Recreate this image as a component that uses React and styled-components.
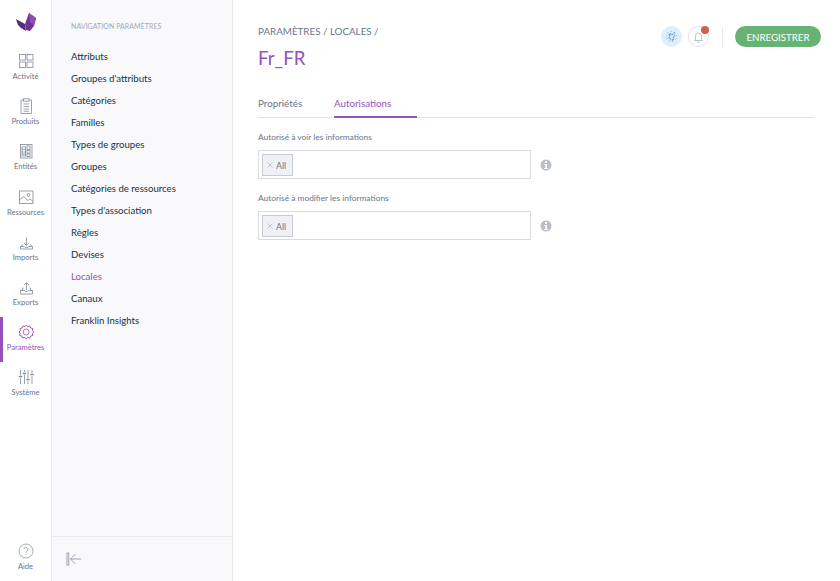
import React from 'react'
import styled, { createGlobalStyle } from 'styled-components'

const Global = createGlobalStyle`
  html, body { margin: 0; padding: 0; height: 100%; background: #fff; }
  body { font-family: Lato, "Open Sans", sans-serif; overflow: hidden; }
  #root { height: 100%; }
`

const purple = '#9452ba'

const Page = styled.div`
  display: flex;
  width: 840px;
  height: 581px;
`

const Menu = styled.nav`
  width: 51px;
  flex: none;
  display: flex;
  flex-direction: column;
  align-items: stretch;
  background: #fff;
  border-right: 1px solid #e8ebee;
`

const LogoBox = styled.div`
  height: 46px;
  display: flex;
  justify-content: center;
  padding-top: 12px;
  box-sizing: border-box;
`

const MenuItem = styled.div`
  height: 45.2px;
  display: flex;
  flex-direction: column;
  align-items: center;
  padding-top: 6px;
  box-sizing: border-box;
  gap: 1px;
  font-size: 7.6px;
  line-height: 11px;
  color: ${(p) => (p.$active ? purple : '#67768a')};
  border-left: 3px solid ${(p) => (p.$active ? purple : 'transparent')};
  padding-right: 3px;
  white-space: nowrap;
  svg { display: block; }
`

const MenuSpacer = styled.div`
  flex: 1;
`

const HelpItem = styled(MenuItem)`
  height: 38px;
  padding-top: 0;
  gap: 2px;
  border-left: 0;
  padding-right: 0;
`

const Sidebar = styled.aside`
  width: 180px;
  flex: none;
  display: flex;
  flex-direction: column;
  background: #f9f9fb;
  border-right: 1px solid #e8ebee;
`

const SidebarBody = styled.div`
  flex: 1;
  padding: 21px 19px 0;
`

const SidebarTitle = styled.div`
  font-size: 7.1px;
  line-height: 11px;
  color: #a1a9b7;
  text-transform: uppercase;
  margin-bottom: 14px;
`

const SidebarLink = styled.div`
  height: 22px;
  line-height: 22px;
  font-size: 9.6px;
  color: ${(p) => (p.$active ? purple : '#11324d')};
`

const SidebarFooter = styled.div`
  height: 44px;
  border-top: 1px solid #e8ebee;
  display: flex;
  align-items: center;
  padding-left: 14px;
`

const Main = styled.main`
  flex: 1;
  padding: 0 26px 0 25px;
  min-width: 0;
`

const Header = styled.header`
  display: flex;
  justify-content: space-between;
  height: 85px;
`

const HeaderText = styled.div`
  padding-top: 24px;
`

const Breadcrumb = styled.div`
  font-size: 9.8px;
  line-height: 14px;
  color: #67768a;
  text-transform: uppercase;
`

const PageTitle = styled.h1`
  margin: 8px 0 0;
  font-size: 18.7px;
  line-height: 24px;
  font-weight: 400;
  color: ${purple};
`

const Actions = styled.div`
  display: flex;
  align-items: center;
  height: 21px;
  margin-top: 26px;
  margin-right: -7px;
`

const RoundIcon = styled.div`
  position: relative;
  width: 21px;
  height: 21px;
  border-radius: 50%;
  box-sizing: border-box;
  display: flex;
  align-items: center;
  justify-content: center;
  margin-left: 6px;
  background: ${(p) => (p.$blue ? '#deeefb' : '#fff')};
  border: 1px solid ${(p) => (p.$blue ? '#deeefb' : '#dfe1e6')};
`

const Badge = styled.span`
  position: absolute;
  top: -1px;
  right: -1px;
  width: 8px;
  height: 8px;
  border-radius: 50%;
  background: #d4604f;
`

const Divider = styled.div`
  width: 1px;
  height: 20px;
  background: #e8ebee;
  margin: 0 12px 0 13px;
`

const SaveButton = styled.button`
  width: 86px;
  height: 21px;
  padding: 0;
  border: 0;
  border-radius: 11px;
  background: #67b373;
  color: #fff;
  font-family: inherit;
  font-size: 9.7px;
  text-transform: uppercase;
`

const Tabs = styled.div`
  display: flex;
  height: 33px;
  box-sizing: border-box;
  border-bottom: 1px solid #dfe1e6;
  font-size: 9.8px;
`

const Tab = styled.div`
  width: ${(p) => p.$width}px;
  height: 33px;
  box-sizing: border-box;
  line-height: 36px;
  color: ${(p) => (p.$active ? purple : '#67768a')};
  border-bottom: ${(p) => (p.$active ? `2px solid ${purple}` : '0')};
`

const Form = styled.div`
  padding-top: 14px;
`

const Field = styled.div`
  height: 61px;
`

const FieldLabel = styled.div`
  font-size: 8.4px;
  line-height: 11px;
  height: 18px;
  color: #67768a;
`

const FieldRow = styled.div`
  display: flex;
  align-items: center;
`

const TagInput = styled.div`
  width: 273px;
  height: 29px;
  box-sizing: border-box;
  border: 1px solid #d9dde2;
  background: #fff;
  padding: 3px;
  display: flex;
`

const Tag = styled.div`
  width: 31px;
  height: 22px;
  box-sizing: border-box;
  border: 1px solid #c7cbd4;
  background: #f0f1f7;
  display: flex;
  align-items: center;
  gap: 3px;
  padding-left: 4px;
  font-size: 8.8px;
  color: #67768a;
`

const InfoIcon = styled.div`
  margin-left: 9px;
  width: 12px;
  height: 12px;
  display: flex;
`

const Stroke = ({ children, color = '#7f8b9b' }) => (
  <svg width="18" height="18" viewBox="0 0 18 18" fill="none" stroke={color} strokeWidth="0.8">
    {children}
  </svg>
)

const icons = {
  activity: (
    <>
      <rect x="2.5" y="2.5" width="6" height="5.5" />
      <rect x="10" y="2.5" width="6" height="5.5" />
      <rect x="2.5" y="10" width="6" height="5.5" />
      <rect x="10" y="10" width="6" height="5.5" />
    </>
  ),
  products: (
    <>
      <path d="M6.5 3H4v13.5h10.5V3H12" />
      <rect x="6.5" y="1.8" width="5.5" height="2.4" />
      <path d="M6.5 7h5.5M6.5 9.5h5.5M6.5 12h5.5M6.5 14.2h5.5" />
    </>
  ),
  entities: (
    <>
      <rect x="3.5" y="2.5" width="11.5" height="13.5" />
      <rect x="5" y="5" width="3.5" height="9" />
      <rect x="10" y="4" width="3" height="3.4" />
      <rect x="10" y="8.3" width="3" height="2.8" />
      <rect x="10" y="12" width="3" height="2.6" />
      <path d="M5 7.5h3.5M5 10h3.5M5 12h3.5" />
    </>
  ),
  assets: (
    <>
      <rect x="2.5" y="3" width="13.5" height="12.5" />
      <path d="M2.5 12l4-3.5 4.5 4 2-1.500 3 2.500" />
      <circle cx="11.5" cy="7" r="1.4" />
    </>
  ),
  imports: (
    <>
      <path d="M9.500 4.500v8M7 10l2.500 2.500L12 10" />
      <path d="M6 11.500l-2.500 2V16h12v-2.500l-2.500-2M3.500 13.500h4l.8 1h2.400l.8-1h4" />
    </>
  ),
  exports: (
    <>
      <path d="M9.500 12V4.500M7 7l2.500-2.500L12 7" />
      <path d="M6.500 10H5.500v2.500h-2V16h12v-3.500h-2V10h-1M3.500 12.500h4l.8 1h2.400l.8-1h4" />
    </>
  ),
  settings: (
    <>
      <circle cx="9.2" cy="9" r="3" />
      <path
        strokeWidth="1"
        d="M9.2 2.200l1.500 1.300 2-.5.900 1.900 2 .6-.2 2.100 1.400 1.400-1.400 1.400.2 2.100-2 .6-.9 1.900-2-.5-1.500 1.300-1.500-1.300-2 .5-.9-1.900-2-.6.2-2.100L2 9l1.400-1.400-.2-2.100 2-.6.9-1.900 2 .5z"
      />
    </>
  ),
  system: (
    <>
      <path d="M3.500 2v5M3.500 10v6M7.500 2v2M7.500 7v9M11 2v8M11 13v3M15 2v3M15 8v8" />
      <path strokeWidth="1.400" d="M1.800 8.500h3.400M5.800 5.500h3.400M9.300 11.500h3.400M13.300 6.500h3.400" />
    </>
  ),
}

const menuItems = [
  ['activity', 'Activité'],
  ['products', 'Produits'],
  ['entities', 'Entités'],
  ['assets', 'Ressources'],
  ['imports', 'Imports'],
  ['exports', 'Exports'],
  ['settings', 'Paramètres'],
  ['system', 'Système'],
]

const links = [
  'Attributs',
  "Groupes d'attributs",
  'Catégories',
  'Familles',
  'Types de groupes',
  'Groupes',
  'Catégories de ressources',
  "Types d'association",
  'Règles',
  'Devises',
  'Locales',
  'Canaux',
  'Franklin Insights',
]

const fields = ['Autorisé à voir les informations', 'Autorisé à modifier les informations']

function App() {
  return (
    <Page>
      <Global />
      <Menu>
        <LogoBox>
          <svg width="20" height="20" viewBox="0 0 20 20">
            <path d="M0 7l9 5 1 7-5-3-3-3z" fill="#5a2a82" />
            <path d="M9 12L13 1l7 5-2 8-4 5-4-1z" fill="#6d3596" />
            <path d="M13 1l7 5-2 8-4-4z" fill="#8a4fb0" />
          </svg>
        </LogoBox>
        {menuItems.map(([icon, label]) => (
          <MenuItem key={icon} $active={icon === 'settings'}>
            <Stroke color={icon === 'settings' ? purple : undefined}>{icons[icon]}</Stroke>
            {label}
          </MenuItem>
        ))}
        <MenuSpacer />
        <HelpItem>
          <svg width="16" height="16" viewBox="0 0 16 16" fill="none" stroke="#7f8b9b" strokeWidth="0.7">
            <circle cx="8" cy="8" r="7" />
            <path d="M6 6.300a2 2 0 1 1 3 1.700c-.7.400-1 .8-1 1.700M8 11.200v.8" />
          </svg>
          Aide
        </HelpItem>
      </Menu>
      <Sidebar>
        <SidebarBody>
          <SidebarTitle>Navigation paramètres</SidebarTitle>
          {links.map((link) => (
            <SidebarLink key={link} $active={link === 'Locales'}>
              {link}
            </SidebarLink>
          ))}
        </SidebarBody>
        <SidebarFooter>
          <svg width="16" height="14" viewBox="0 0 16 14" fill="none" stroke="#8b93a1" strokeWidth="0.8">
            <rect x="1" y="1" width="1.800" height="12" />
            <path d="M15 7H4.500M9.500 2L4.500 7l5 5" />
          </svg>
        </SidebarFooter>
      </Sidebar>
      <Main>
        <Header>
          <HeaderText>
            <Breadcrumb>Paramètres / Locales /</Breadcrumb>
            <PageTitle>Fr_FR</PageTitle>
          </HeaderText>
          <Actions>
            <RoundIcon $blue>
              <svg width="13" height="13" viewBox="0 0 13 13" fill="none" stroke="#6f9fc6">
                <path strokeWidth="1.300" strokeDasharray="1.500 .8" d="M5 3.500l1.500 1.500L9 3l.5 3-1.500 2 .5 2.500L6 9.500 4 8l1-2-1.500-1z" />
                <path strokeWidth="0.800" strokeDasharray="1 2.500" d="M1.500 6.500a5 5 0 0 1 10 0 5 5 0 0 1-10 0" />
              </svg>
            </RoundIcon>
            <RoundIcon>
              <svg width="11" height="12" viewBox="0 0 11 12" fill="none" stroke="#a1a9b7" strokeWidth="0.7">
                <path d="M2.500 8.500V5a3 3 0 0 1 6 0v3.500l1 1h-8zM4.500 10.500a1 1 0 0 0 2 0" />
              </svg>
              <Badge />
            </RoundIcon>
            <Divider />
            <SaveButton>Enregistrer</SaveButton>
          </Actions>
        </Header>
        <Tabs>
          <Tab $width={76}>Propriétés</Tab>
          <Tab $width={83} $active>
            Autorisations
          </Tab>
        </Tabs>
        <Form>
          {fields.map((label) => (
            <Field key={label}>
              <FieldLabel>{label}</FieldLabel>
              <FieldRow>
                <TagInput>
                  <Tag>
                    <svg width="6" height="6" viewBox="0 0 6 6" stroke="#a1a9b7" strokeWidth="0.6">
                      <path d="M0.500 0.500l5 5M5.500 0.500l-5 5" />
                    </svg>
                    All
                  </Tag>
                </TagInput>
                <InfoIcon>
                  <svg width="12" height="12" viewBox="0 0 12 12">
                    <circle cx="6" cy="6" r="5.500" fill="#b9bdc4" />
                    <rect x="5" y="2" width="2" height="1.800" fill="#fff" />
                    <path d="M4.300 5h2.700v4h1v1H4.300V9h1V6h-1z" fill="#fff" />
                  </svg>
                </InfoIcon>
              </FieldRow>
            </Field>
          ))}
        </Form>
      </Main>
    </Page>
  )
}

export default App
